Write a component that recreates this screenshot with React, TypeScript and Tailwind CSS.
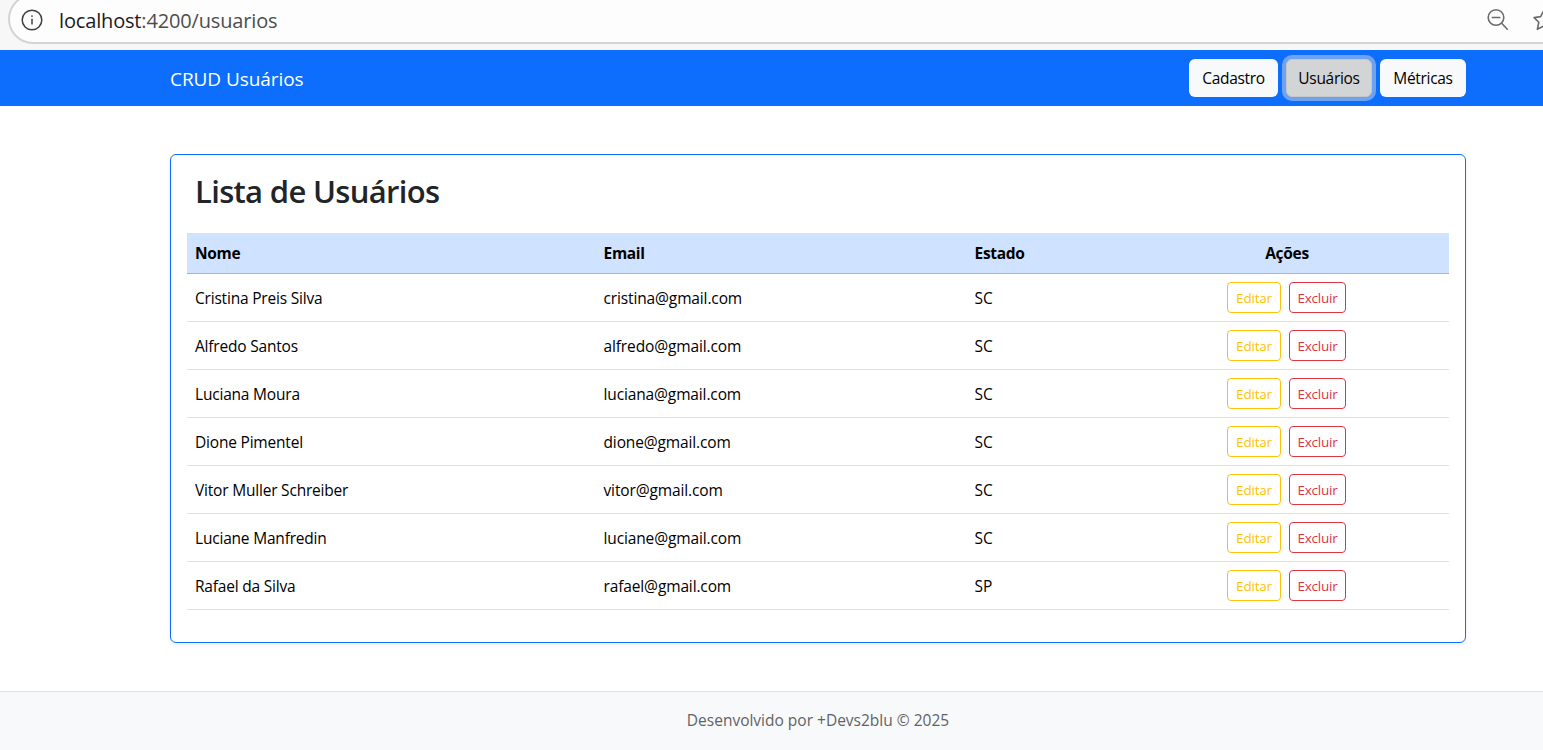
import React from 'react';

type User = { name: string; email: string; state: string };

const users: User[] = [
  { name: 'Cristina Preis Silva', email: 'cristina@gmail.com', state: 'SC' },
  { name: 'Alfredo Santos', email: 'alfredo@gmail.com', state: 'SC' },
  { name: 'Luciana Moura', email: 'luciana@gmail.com', state: 'SC' },
  { name: 'Dione Pimentel', email: 'dione@gmail.com', state: 'SC' },
  { name: 'Vitor Muller Schreiber', email: 'vitor@gmail.com', state: 'SC' },
  { name: 'Luciane Manfredin', email: 'luciane@gmail.com', state: 'SC' },
  { name: 'Rafael da Silva', email: 'rafael@gmail.com', state: 'SP' },
];

function AddressBar() {
  return (
    <div className="h-[50px] overflow-hidden bg-[#f7f7f7] pl-2">
      <div className="-mt-[6px] flex h-[50px] w-[1600px] items-center rounded-l-[25px] border-2 border-[#d4d4d4] bg-[#fdfdfd] pl-[11px]">
        <svg className="mt-[1px] size-[22px] shrink-0" viewBox="0 0 22 22" fill="none" stroke="#3f3f3f" strokeWidth="1.5">
          <circle cx="11" cy="11" r="9.8" />
          <path d="M11 9.8v5.7" />
          <circle cx="11" cy="7.1" r="0.9" fill="#3f3f3f" stroke="none" />
        </svg>
        <span className="ml-4 w-[1427px] shrink-0 pt-[3px] text-[20px] tracking-[-0.16px] text-[#4d4d4d]">
          <span className="text-[#1b1b1b]">localhost</span>:4200/usuarios
        </span>
        <svg className="mt-[2px] size-[24px] shrink-0" viewBox="0 0 24 24" fill="none" stroke="#6b6b6b" strokeWidth="1.6" strokeLinecap="round">
          <circle cx="10" cy="9.5" r="7.8" />
          <path d="M6.3 9.5h7.5M15.7 15.2l5.6 6" />
        </svg>
        <svg className="ml-[22px] mt-[3px] size-[23px] shrink-0" viewBox="0 0 24 24" fill="none" stroke="#6b6b6b" strokeWidth="1.7" strokeLinejoin="round">
          <path d="M12 2.2l3 5.8 6.8 1-4.9 4.8 1.5 7.4-6.4-3.4-6.4 3.4 1.5-7.4-4.9-4.8 6.8-1z" />
        </svg>
      </div>
    </div>
  );
}

function Navbar() {
  return (
    <nav className="flex h-[56px] items-center justify-between bg-[#0d6efd] pl-[170px] pr-[77px]">
      <span className="pt-[2px] text-[19px] tracking-[-0.07px] text-white">CRUD Usuários</span>
      <div className="flex gap-2 text-[15.5px] tracking-[-0.3px] text-black">
        <button className="h-[38px] w-[89px] rounded-md bg-[#f8f9fa] pt-[2px]">Cadastro</button>
        <button className="h-[38px] w-[86px] rounded-md border border-[#c6c7c8] bg-[#d3d4d5] pt-[2px] ring-4 ring-[#6fa3ee]">Usuários</button>
        <button className="h-[38px] w-[86px] rounded-md bg-[#f8f9fa] pt-[2px]">Métricas</button>
      </div>
    </nav>
  );
}

export default function App() {
  return (
    <div className="flex h-[750px] flex-col overflow-hidden bg-white font-['Open_Sans','Noto_Sans',sans-serif] text-black">
      <AddressBar />
      <Navbar />
      <main className="h-[585px] pl-[170px] pt-12">
        <section className="h-[489px] w-[1296px] rounded-md border border-[#0d6efd] px-4 shadow-[0_2px_4px_rgba(0,0,0,0.075)]">
          <h2 className="h-[78px] pl-2 pt-[17px] text-[31px] font-semibold leading-[38px] tracking-[-0.68px] text-[#212529]">Lista de Usuários</h2>
          <table className="w-[1262px] table-fixed border-separate border-spacing-0 text-left text-[15.5px] leading-6 tracking-[-0.3px]">
            <colgroup>
              <col className="w-[408px]" />
              <col className="w-[371px]" />
              <col className="w-[159px]" />
              <col className="w-[324px]" />
            </colgroup>
            <thead>
              <tr className="h-[41px] bg-[#cfe2ff]">
                <th className="border-b border-[#a6b5cc] px-2 font-bold">Nome</th>
                <th className="border-b border-[#a6b5cc] px-2 pl-[8.5px] font-bold">Email</th>
                <th className="border-b border-[#a6b5cc] px-2 pl-[8.5px] font-bold">Estado</th>
                <th className="border-b border-[#a6b5cc] px-2 text-center font-bold">Ações</th>
              </tr>
            </thead>
            <tbody>
              {users.map((u) => (
                <tr key={u.email} className="h-12">
                  <td className="border-b border-[#dee2e6] px-2 tracking-[-0.2px]">{u.name}</td>
                  <td className="border-b border-[#dee2e6] px-2 pl-[8.5px] tracking-[-0.13px]">{u.email}</td>
                  <td className="border-b border-[#dee2e6] px-2 pl-[8.5px] tracking-[0px]">{u.state}</td>
                  <td className="border-b border-[#dee2e6] pl-[7px] pr-[9px]">
                    <div className="flex justify-center gap-2 text-[13.5px] tracking-[-0.2px]">
                      <button className="h-[31px] w-[54px] rounded border border-[#ffc107] pl-[1px] text-[#ffc107]">Editar</button>
                      <button className="h-[31px] w-[57px] rounded border border-[#dc3545] pl-[1px] text-[#dc3545]">Excluir</button>
                    </div>
                  </td>
                </tr>
              ))}
            </tbody>
          </table>
        </section>
      </main>
      <footer className="flex h-[59px] justify-center border-t border-[#dee2e6] bg-[#f8f9fa] pl-[93px] pt-4 text-[15.5px] leading-6 text-[#5f6468]">
        Desenvolvido por +Devs2blu © 2025
      </footer>
    </div>
  );
}
